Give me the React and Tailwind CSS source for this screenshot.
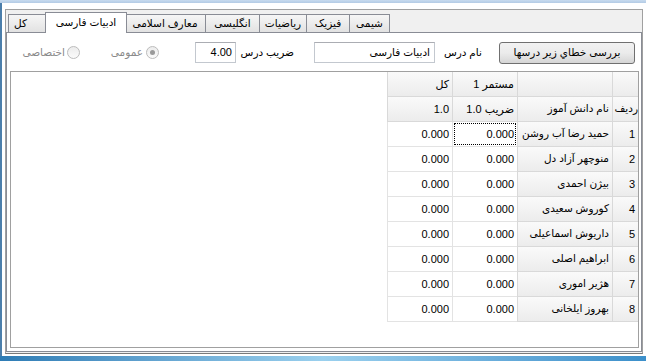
import React from "react";

const FONT = { fontFamily: '"Liberation Sans", "DejaVu Sans", sans-serif' };

const names = [
  "حمید رضا آب روشن",
  "منوچهر آزاد دل",
  "بیژن احمدی",
  "کوروش سعیدی",
  "داریوش اسماعیلی",
  "ابراهیم اصلی",
  "هژیر اموری",
  "بهروز ایلخانی",
];

function Tab({ label, w, selected }) {
  if (selected) {
    return (
      <div
        dir="rtl"
        className={`relative z-10 -mx-[2px] -mb-px h-[21px] border border-b-0 border-[#898c95] bg-white flex items-center justify-center text-[10.5px] text-black ${w}`}
      >
        {label}
      </div>
    );
  }
  return (
    <div
      dir="rtl"
      className={`h-[18px] border border-b-0 border-[#898c95] bg-gradient-to-b from-[#f6f6f6] to-[#e2e2e2] flex items-center justify-center text-[10.5px] text-black -ml-px first:ml-0 ${w}`}
    >
      {label}
    </div>
  );
}

function HeadCell({ w, children, cls = "" }) {
  return (
    <div
      dir="rtl"
      className={`h-full ${w} border-l border-b border-[#d9d9d9] bg-gradient-to-b from-[#fafafa] to-[#ececec] flex items-center justify-start pr-[3px] whitespace-nowrap overflow-hidden ${cls}`}
    >
      {children}
    </div>
  );
}

function DataCell({ w, children, focus }) {
  return (
    <div className={`relative h-full ${w} border-l border-b border-[#e3e3e3] bg-white flex items-center justify-end pr-[3px]`}>
      {children}
      {focus && <div className="absolute inset-[1px] border border-dotted border-black" />}
    </div>
  );
}

function Radio({ checked }) {
  return (
    <div className="w-[13px] h-[13px] rounded-full border border-[#bcbcbc] bg-gradient-to-b from-[#ececec] to-[#fbfbfb] flex items-center justify-center">
      {checked && <div className="w-[5px] h-[5px] rounded-full bg-[#9a9a9a]" />}
    </div>
  );
}

export default function App() {
  return (
    <div className="w-[646px] h-[361px] bg-white flex flex-col overflow-hidden" style={FONT}>
      <div className="h-[3px] bg-gradient-to-b from-[#c8dbef] to-[#b3cbe5]" />
      <div className="flex-1 flex min-h-0">
        <div className="w-[2px] bg-[#4b7eab]" />
        <div className="flex-1 pt-[6px] pl-[3px] pr-[3px] pb-[2px] flex flex-col">
          <div className="flex-1 flex flex-col border border-[#a0a0a0] border-b-[#7a7a7a] bg-[#f0f0f0]">
            {/* tab strip */}
            <div className="h-[22px] flex items-end pl-[2px]">
              <Tab label="کل" w="w-[39px] !justify-end pl-[5px]" />
              <Tab label="ادبیات فارسی" w="w-[82px]" selected />
              <Tab label="معارف اسلامی" w="w-[82px]" />
              <Tab label="انگلیسی" w="w-[55px]" />
              <Tab label="ریاضیات" w="w-[48px]" />
              <Tab label="فیزیک" w="w-[44px]" />
              <Tab label="شیمی" w="w-[41px]" />
            </div>
            {/* tab page */}
            <div className="flex-1 mb-[1px] border border-[#898c95] bg-white flex flex-col pt-[9px] pl-[3px] pr-[2px] pb-[3px]">
              {/* controls row */}
              <div className="h-[21px] flex items-center text-[11px] text-black">
                <div dir="rtl" className="ml-[14px] w-[41px] text-[10.5px] text-[#8a8a8a] whitespace-nowrap">اختصاصی</div>
                <div className="ml-[2px]"><Radio /></div>
                <div dir="rtl" className="ml-[28px] w-[35px] text-[10.5px] text-[#8a8a8a] whitespace-nowrap">عمومی</div>
                <div className="ml-[3px]"><Radio checked /></div>
                <div className="ml-[36px] w-[41px] h-[21px] border border-[#c3c8cf] border-t-[#abadb3] flex items-center justify-end pr-[3px]">4.00</div>
                <div dir="rtl" className="ml-[5px] w-[53px] text-[10.5px] whitespace-nowrap">ضریب درس</div>
                <div dir="rtl" className="ml-[20px] w-[121px] h-[21px] border border-[#c3c8cf] border-t-[#abadb3] flex items-center justify-start pr-[4px] text-[10.5px] whitespace-nowrap">ادبیات فارسی</div>
                <div dir="rtl" className="ml-[5px] w-[42px] text-[10.5px] whitespace-nowrap">نام درس</div>
                <div dir="rtl" className="ml-[17px] w-[136px] h-[22px] rounded-[3px] border border-[#707070] bg-gradient-to-b from-[#f2f2f2] via-[#ebebeb] to-[#d6d6d6] flex items-center justify-center text-[10.5px] whitespace-nowrap">
                  بررسی خطاي زير درسها
                </div>
              </div>
              {/* grid */}
              <div className="mt-[8px] flex-1 border border-[#a0a0a0] bg-white flex flex-col text-[11px] text-black">
                <div className="h-[25px] flex">
                  <div className="ml-auto flex h-full">
                    <HeadCell w="w-[65px]">کل</HeadCell>
                    <HeadCell w="w-[65px]">مستمر 1</HeadCell>
                    <HeadCell w="w-[95px]" />
                    <HeadCell w="w-[26px]" />
                  </div>
                </div>
                <div className="h-[25px] flex">
                  <div className="ml-auto flex h-full">
                    <HeadCell w="w-[65px]">1.0</HeadCell>
                    <HeadCell w="w-[65px]">ضریب 1.0</HeadCell>
                    <HeadCell w="w-[95px]" cls="text-[10.5px]">نام دانش آموز</HeadCell>
                    <HeadCell w="w-[26px]" cls="!pr-0 text-[10.5px]">ردیف</HeadCell>
                  </div>
                </div>
                {names.map((n, i) => (
                  <div key={i} className="h-[25px] flex">
                    <div className="ml-auto flex h-full">
                      <DataCell w="w-[65px]">0.000</DataCell>
                      <DataCell w="w-[65px]" focus={i === 0}>0.000</DataCell>
                      <HeadCell w="w-[95px]" cls="text-[10.5px]">{n}</HeadCell>
                      <HeadCell w="w-[26px]">{i + 1}</HeadCell>
                    </div>
                  </div>
                ))}
              </div>
            </div>
          </div>
        </div>
      </div>
      <div className="h-[5px] bg-gradient-to-r from-[#2d7cb5] via-[#9ad0ee] to-[#3b8fca]" />
    </div>
  );
}
